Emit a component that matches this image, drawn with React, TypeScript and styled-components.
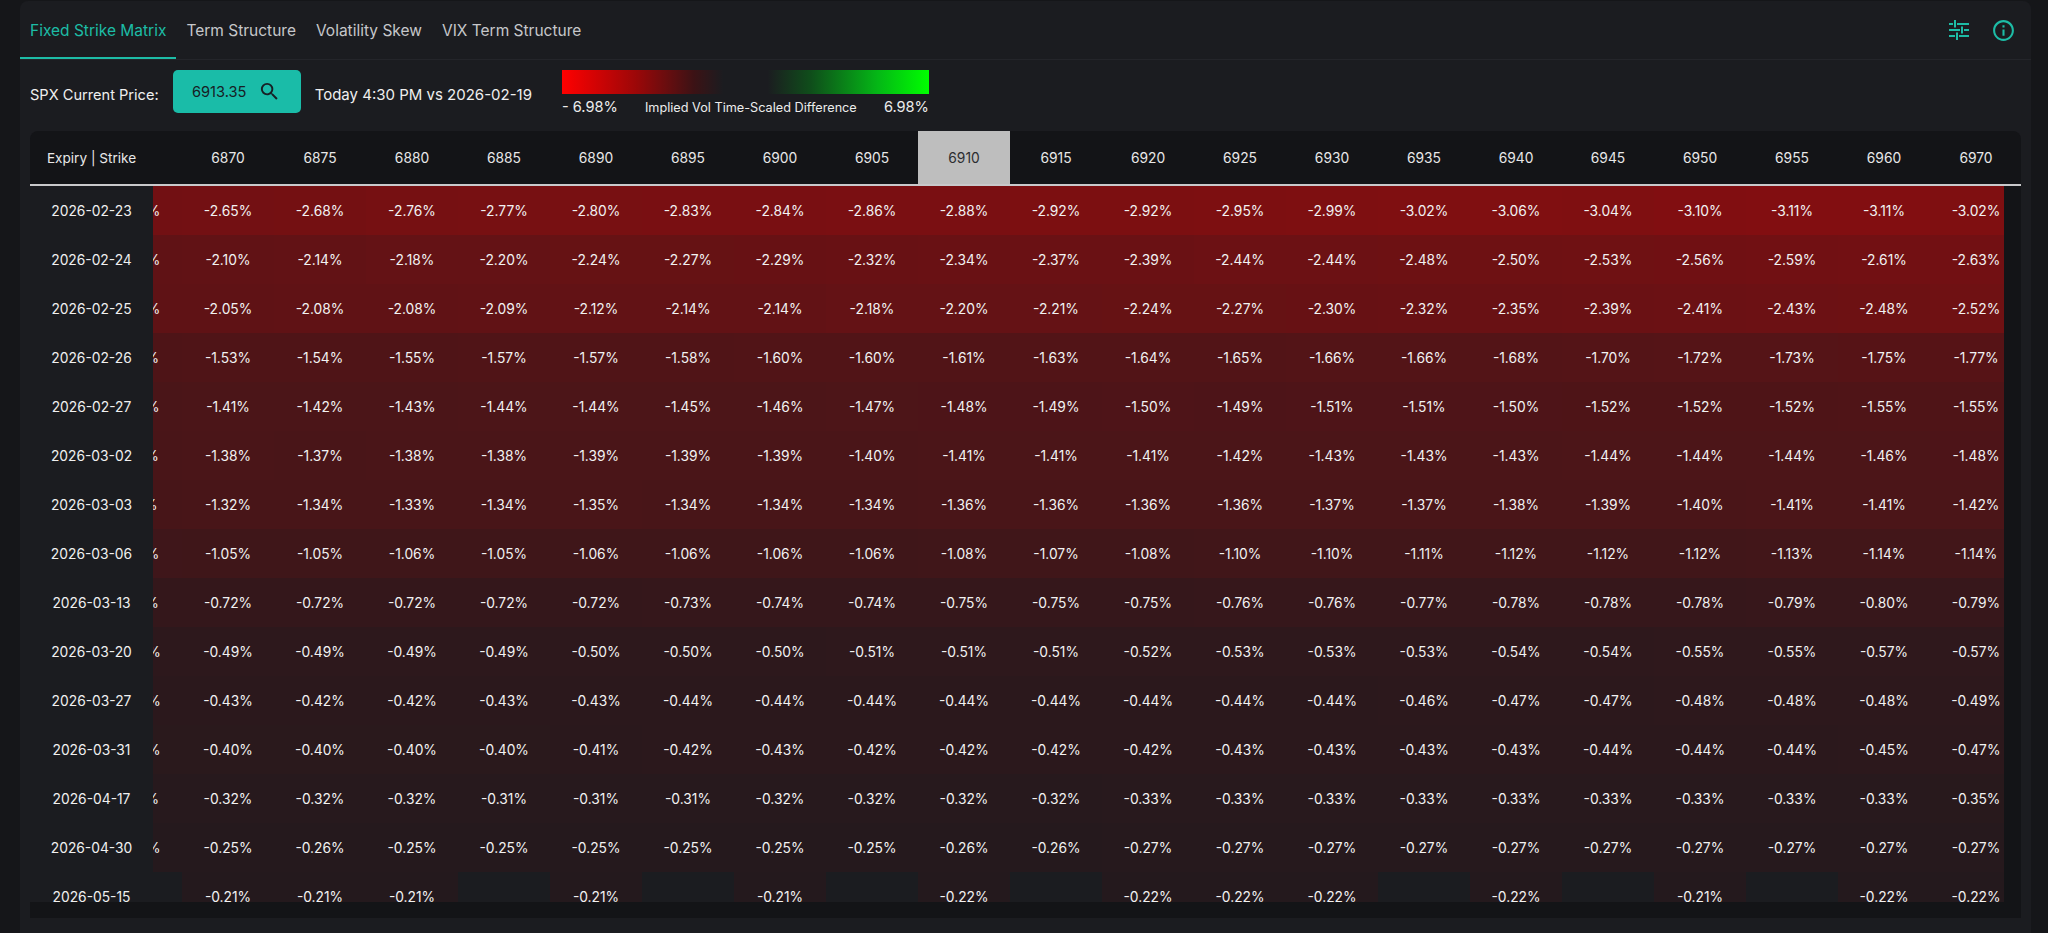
import React, { useLayoutEffect, useRef } from 'react';
import styled, { createGlobalStyle } from 'styled-components';
import { MdSearch, MdInfoOutline } from 'react-icons/md';

const TEAL = '#1dbca6';

const GlobalStyle = createGlobalStyle`
  * { box-sizing: border-box; }
  html, body {
    margin: 0;
    padding: 0;
    height: 100%;
    overflow: hidden;
    background: #151619;
  }
  body {
    font-family: Inter, "Noto Sans", "Liberation Sans", sans-serif;
    color: #ececec;
    -webkit-font-smoothing: antialiased;
  }
`;

const Page = styled.div`
  height: 100vh;
  padding: 1px 17px 0 20px;
  display: flex;
`;

const Panel = styled.main`
  flex: 1;
  min-width: 0;
  background: #1b1c20;
  border-radius: 8px 8px 0 0;
  display: flex;
  flex-direction: column;
`;

const TabBar = styled.nav`
  height: 59px;
  flex: none;
  display: flex;
  align-items: stretch;
  justify-content: space-between;
  border-bottom: 1px solid #24252a;
  padding-right: 15px;
`;

const Tabs = styled.div`
  display: flex;
  align-items: stretch;
`;

const Tab = styled.button<{ $active?: boolean }>`
  all: unset;
  cursor: pointer;
  padding: 3px 10px 0;
  display: flex;
  align-items: center;
  font-family: Inter, "Noto Sans", sans-serif;
  font-size: 15.5px;
  color: ${(p) => (p.$active ? TEAL : '#c6c7ca')};
  border-bottom: 2px solid ${(p) => (p.$active ? TEAL : 'transparent')};
`;

const IconGroup = styled.div`
  display: flex;
  align-items: center;
  gap: 22px;
  color: ${TEAL};
`;

const IconButton = styled.button`
  all: unset;
  cursor: pointer;
  display: flex;
  align-items: center;
  justify-content: center;
  color: ${TEAL};
`;

const Controls = styled.div`
  height: 71px;
  flex: none;
  display: flex;
  align-items: flex-start;
  padding: 10px 10px 0;
`;

const Label = styled.span<{ $large?: boolean }>`
  margin-top: 16px;
  line-height: 18px;
  font-size: ${(p) => (p.$large ? '15px' : '14.6px')};
  color: #efefef;
  white-space: nowrap;
`;

const PriceButton = styled.button`
  all: unset;
  cursor: pointer;
  margin: 0 14px;
  width: 128px;
  height: 43px;
  border-radius: 5px;
  background: #1abca8;
  color: #172024;
  font-family: Inter, "Noto Sans", sans-serif;
  font-size: 14.6px;
  display: flex;
  align-items: center;
  justify-content: center;
  gap: 12px;
`;

const Legend = styled.div`
  margin-left: 30px;
  width: 367px;
  display: flex;
  flex-direction: column;
  gap: 4px;
`;

const LegendBar = styled.div`
  height: 24px;
  background: linear-gradient(
    to right,
    #ff0000 0%,
    rgba(200, 0, 0, 0.75) 20%,
    rgba(120, 0, 0, 0.35) 36%,
    rgba(27, 28, 32, 0) 44%,
    rgba(27, 28, 32, 0) 56%,
    rgba(0, 140, 20, 0.45) 68%,
    rgba(0, 210, 20, 0.85) 86%,
    #00ff00 100%
  );
`;

const LegendLabels = styled.div`
  display: flex;
  justify-content: space-between;
  align-items: center;
  height: 18px;
`;

const LegendValue = styled.span`
  font-size: 14.6px;
  color: #ececec;
`;

const LegendTitle = styled.span`
  font-size: 12.7px;
  color: #ececec;
`;

const Card = styled.section`
  margin: 0 10px;
  background: #131417;
  border-radius: 8px 8px 0 0;
  display: flex;
  flex-direction: column;
  overflow: hidden;
  padding-bottom: 16px;
`;

const HeadRow = styled.div`
  display: flex;
  height: 55px;
  border-bottom: 2px solid #c9c9cb;
`;

const Corner = styled.div`
  width: 123px;
  flex: none;
  display: flex;
  align-items: center;
  justify-content: center;
  font-size: 13.6px;
  color: #e8e8e8;
`;

const Viewport = styled.div<{ $gutter?: boolean }>`
  flex: 1;
  min-width: 0;
  overflow: hidden;
  margin-right: ${(p) => (p.$gutter ? '17px' : '0')};
`;

const Track = styled.div`
  width: max-content;
  height: 100%;
  display: flex;
  flex-direction: column;
`;

const StrikeRow = styled.div`
  display: flex;
  width: max-content;
  height: 100%;
`;

const HeadCell = styled.div<{ $active?: boolean }>`
  width: 92px;
  flex: none;
  display: flex;
  align-items: center;
  justify-content: center;
  font-size: 13.8px;
  color: ${(p) => (p.$active ? '#2c2d30' : '#e8e8e8')};
  background: ${(p) => (p.$active ? '#bebebe' : 'transparent')};
`;

const BodyArea = styled.div`
  display: flex;
  height: 716px;
`;

const ExpiryColumn = styled.div`
  width: 123px;
  flex: none;
  display: flex;
  flex-direction: column;
  background: #1b1c20;
`;

const ExpiryCell = styled.div`
  height: 49px;
  flex: none;
  display: flex;
  align-items: center;
  justify-content: center;
  font-size: 13.8px;
  color: #f0f0f0;
`;

const DataRow = styled.div`
  display: flex;
  height: 49px;
  flex: none;
`;

const Cell = styled.div`
  width: 92px;
  flex: none;
  display: flex;
  align-items: center;
  justify-content: center;
  font-size: 13.8px;
  color: #f2f2f2;
  background: #1b1c20;
`;

const TuneIcon = () => (
  <svg width="20" height="20" viewBox="0 0 20 20" fill="currentColor" aria-hidden>
    <rect x="0" y="3" width="4" height="2" />
    <rect x="8" y="3" width="12" height="2" />
    <rect x="5" y="0" width="2" height="7.5" />
    <rect x="0" y="9" width="11" height="2" />
    <rect x="15" y="9" width="5" height="2" />
    <rect x="12" y="6.5" width="2" height="7" />
    <rect x="0" y="15" width="6" height="2" />
    <rect x="10" y="15" width="10" height="2" />
    <rect x="7" y="12.5" width="2" height="7.5" />
  </svg>
);

const STRIKES = [
  6865, 6870, 6875, 6880, 6885, 6890, 6895, 6900, 6905, 6910, 6915, 6920, 6925, 6930, 6935, 6940,
  6945, 6950, 6955, 6960, 6970,
];
const ATM = 6910;
const SCALE = 6.98;
const SCROLL_LEFT = 63;

type MatrixRow = { expiry: string; values: (number | null)[] };

const ROWS: MatrixRow[] = [
  { expiry: '2026-02-23', values: [-2.62, -2.65, -2.68, -2.76, -2.77, -2.8, -2.83, -2.84, -2.86, -2.88, -2.92, -2.92, -2.95, -2.99, -3.02, -3.06, -3.04, -3.1, -3.11, -3.11, -3.02] },
  { expiry: '2026-02-24', values: [-2.08, -2.1, -2.14, -2.18, -2.2, -2.24, -2.27, -2.29, -2.32, -2.34, -2.37, -2.39, -2.44, -2.44, -2.48, -2.5, -2.53, -2.56, -2.59, -2.61, -2.63] },
  { expiry: '2026-02-25', values: [-2.03, -2.05, -2.08, -2.08, -2.09, -2.12, -2.14, -2.14, -2.18, -2.2, -2.21, -2.24, -2.27, -2.3, -2.32, -2.35, -2.39, -2.41, -2.43, -2.48, -2.52] },
  { expiry: '2026-02-26', values: [-1.52, -1.53, -1.54, -1.55, -1.57, -1.57, -1.58, -1.6, -1.6, -1.61, -1.63, -1.64, -1.65, -1.66, -1.66, -1.68, -1.7, -1.72, -1.73, -1.75, -1.77] },
  { expiry: '2026-02-27', values: [-1.4, -1.41, -1.42, -1.43, -1.44, -1.44, -1.45, -1.46, -1.47, -1.48, -1.49, -1.5, -1.49, -1.51, -1.51, -1.5, -1.52, -1.52, -1.52, -1.55, -1.55] },
  { expiry: '2026-03-02', values: [-1.37, -1.38, -1.37, -1.38, -1.38, -1.39, -1.39, -1.39, -1.4, -1.41, -1.41, -1.41, -1.42, -1.43, -1.43, -1.43, -1.44, -1.44, -1.44, -1.46, -1.48] },
  { expiry: '2026-03-03', values: [-1.31, -1.32, -1.34, -1.33, -1.34, -1.35, -1.34, -1.34, -1.34, -1.36, -1.36, -1.36, -1.36, -1.37, -1.37, -1.38, -1.39, -1.4, -1.41, -1.41, -1.42] },
  { expiry: '2026-03-06', values: [-1.04, -1.05, -1.05, -1.06, -1.05, -1.06, -1.06, -1.06, -1.06, -1.08, -1.07, -1.08, -1.1, -1.1, -1.11, -1.12, -1.12, -1.12, -1.13, -1.14, -1.14] },
  { expiry: '2026-03-13', values: [-0.71, -0.72, -0.72, -0.72, -0.72, -0.72, -0.73, -0.74, -0.74, -0.75, -0.75, -0.75, -0.76, -0.76, -0.77, -0.78, -0.78, -0.78, -0.79, -0.8, -0.79] },
  { expiry: '2026-03-20', values: [-0.48, -0.49, -0.49, -0.49, -0.49, -0.5, -0.5, -0.5, -0.51, -0.51, -0.51, -0.52, -0.53, -0.53, -0.53, -0.54, -0.54, -0.55, -0.55, -0.57, -0.57] },
  { expiry: '2026-03-27', values: [-0.42, -0.43, -0.42, -0.42, -0.43, -0.43, -0.44, -0.44, -0.44, -0.44, -0.44, -0.44, -0.44, -0.44, -0.46, -0.47, -0.47, -0.48, -0.48, -0.48, -0.49] },
  { expiry: '2026-03-31', values: [-0.39, -0.4, -0.4, -0.4, -0.4, -0.41, -0.42, -0.43, -0.42, -0.42, -0.42, -0.42, -0.43, -0.43, -0.43, -0.43, -0.44, -0.44, -0.44, -0.45, -0.47] },
  { expiry: '2026-04-17', values: [-0.31, -0.32, -0.32, -0.32, -0.31, -0.31, -0.31, -0.32, -0.32, -0.32, -0.32, -0.33, -0.33, -0.33, -0.33, -0.33, -0.33, -0.33, -0.33, -0.33, -0.35] },
  { expiry: '2026-04-30', values: [-0.25, -0.25, -0.26, -0.25, -0.25, -0.25, -0.25, -0.25, -0.25, -0.26, -0.26, -0.27, -0.27, -0.27, -0.27, -0.27, -0.27, -0.27, -0.27, -0.27, -0.27] },
  { expiry: '2026-05-15', values: [null, -0.21, -0.21, -0.21, null, -0.21, null, -0.21, null, -0.22, null, -0.22, -0.22, -0.22, null, -0.22, null, -0.21, null, -0.22, -0.22] },
];

const BASE = [29, 26, 30];

function heat(v: number): string {
  const a = Math.min(Math.abs(v) / SCALE, 1);
  const target = v < 0 ? [255, 0, 0] : [0, 255, 0];
  const c = BASE.map((b, i) => Math.round(b + (target[i] - b) * a));
  return `rgb(${c[0]}, ${c[1]}, ${c[2]})`;
}

const fmt = (v: number) => `${v.toFixed(2)}%`;

const TABS = ['Fixed Strike Matrix', 'Term Structure', 'Volatility Skew', 'VIX Term Structure'];

export default function App() {
  const headRef = useRef<HTMLDivElement>(null);
  const bodyRef = useRef<HTMLDivElement>(null);

  useLayoutEffect(() => {
    if (headRef.current) headRef.current.scrollLeft = SCROLL_LEFT;
    if (bodyRef.current) bodyRef.current.scrollLeft = SCROLL_LEFT;
  }, []);

  return (
    <>
      <GlobalStyle />
      <Page>
        <Panel>
          <TabBar>
            <Tabs>
              {TABS.map((t, i) => (
                <Tab key={t} $active={i === 0}>
                  {t}
                </Tab>
              ))}
            </Tabs>
            <IconGroup>
              <IconButton aria-label="settings">
                <TuneIcon />
              </IconButton>
              <IconButton aria-label="info">
                <MdInfoOutline size={25} />
              </IconButton>
            </IconGroup>
          </TabBar>

          <Controls>
            <Label>SPX Current Price:</Label>
            <PriceButton>
              <span>6913.35</span>
              <MdSearch size={23} />
            </PriceButton>
            <Label $large>Today 4:30 PM vs 2026-02-19</Label>
            <Legend>
              <LegendBar />
              <LegendLabels>
                <LegendValue>- 6.98%</LegendValue>
                <LegendTitle>Implied Vol Time-Scaled Difference</LegendTitle>
                <LegendValue>6.98%</LegendValue>
              </LegendLabels>
            </Legend>
          </Controls>

          <Card>
            <HeadRow>
              <Corner>Expiry | Strike</Corner>
              <Viewport ref={headRef}>
                <StrikeRow>
                  {STRIKES.map((s) => (
                    <HeadCell key={s} $active={s === ATM}>
                      {s}
                    </HeadCell>
                  ))}
                </StrikeRow>
              </Viewport>
            </HeadRow>
            <BodyArea>
              <ExpiryColumn>
                {ROWS.map((r) => (
                  <ExpiryCell key={r.expiry}>{r.expiry}</ExpiryCell>
                ))}
              </ExpiryColumn>
              <Viewport ref={bodyRef} $gutter>
                <Track>
                  {ROWS.map((r) => (
                    <DataRow key={r.expiry}>
                      {r.values.map((v, i) =>
                        v === null ? (
                          <Cell key={i} />
                        ) : (
                          <Cell key={i} style={{ background: heat(v) }}>
                            {fmt(v)}
                          </Cell>
                        )
                      )}
                    </DataRow>
                  ))}
                </Track>
              </Viewport>
            </BodyArea>
          </Card>
        </Panel>
      </Page>
    </>
  );
}
